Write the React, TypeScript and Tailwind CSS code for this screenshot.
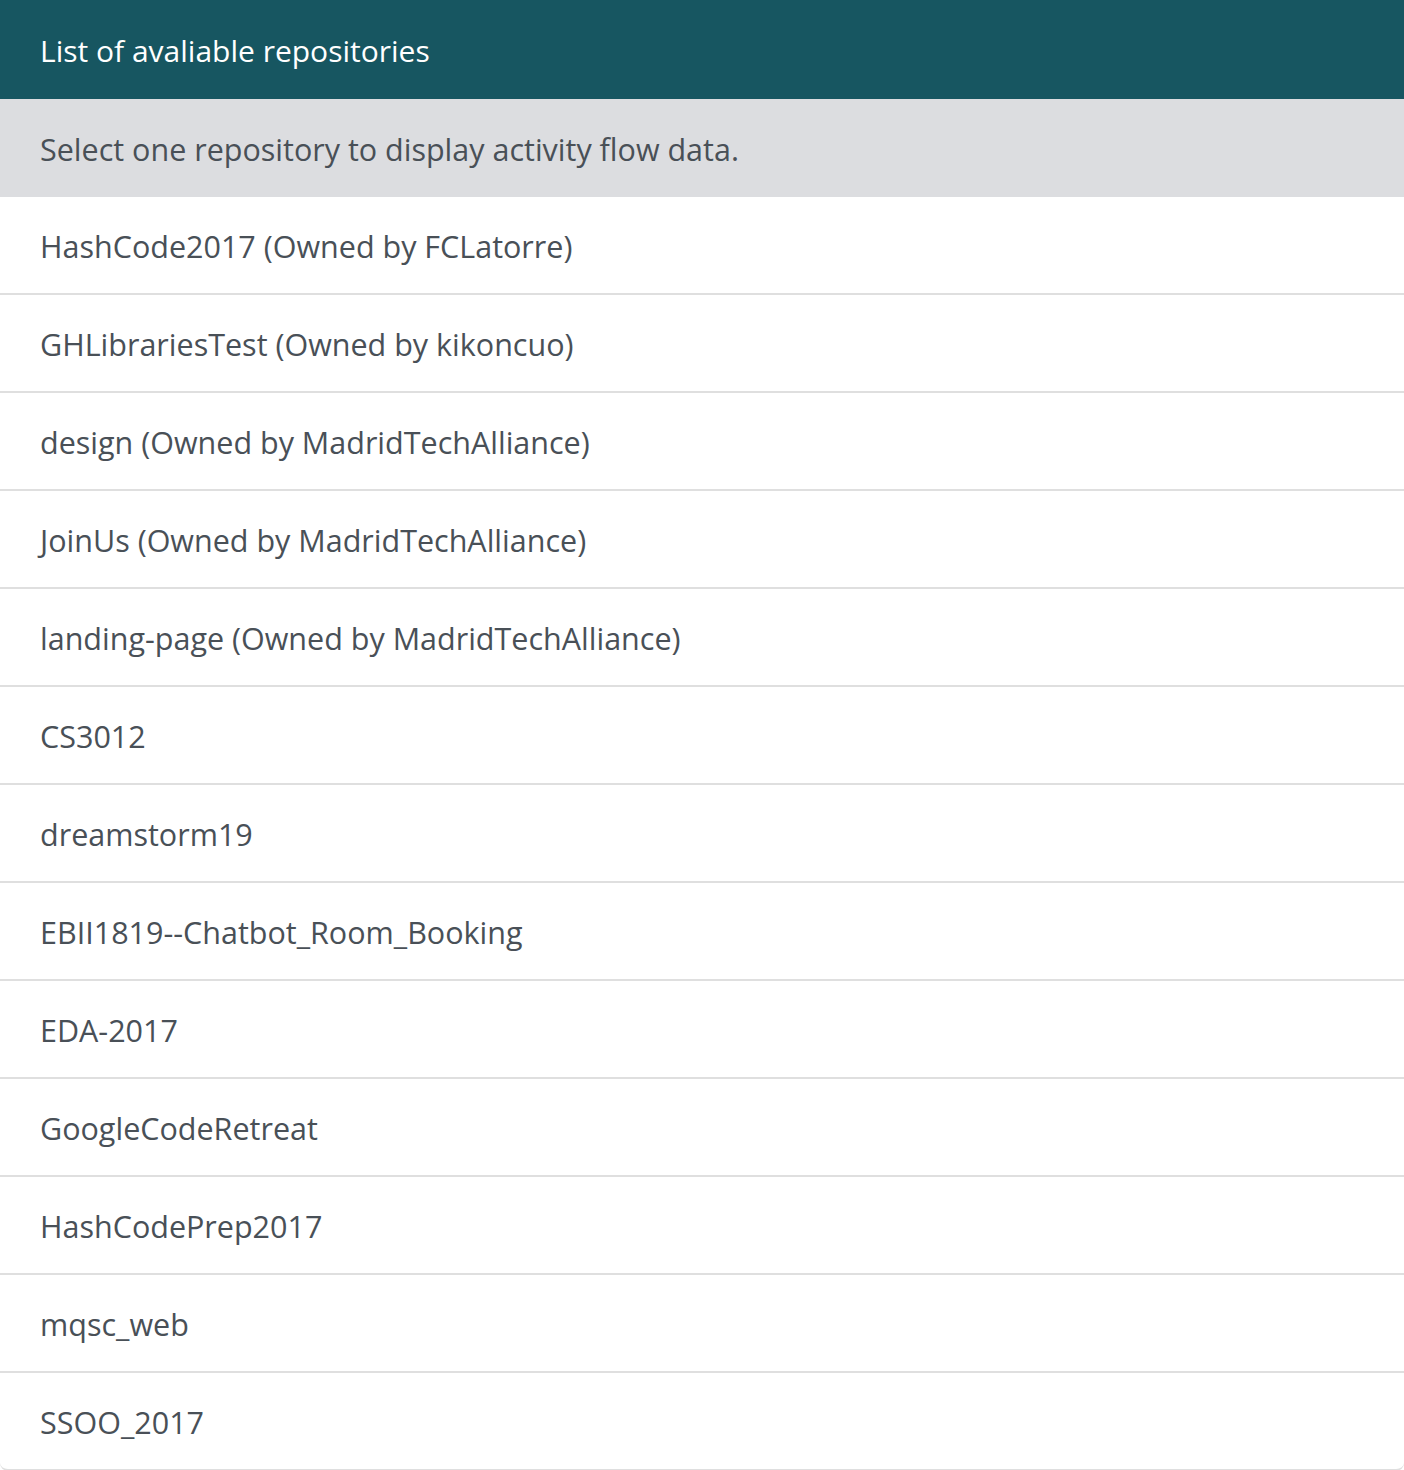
import React from 'react';

const repos: string[] = [
  'HashCode2017 (Owned by FCLatorre)',
  'GHLibrariesTest (Owned by kikoncuo)',
  'design (Owned by MadridTechAlliance)',
  'JoinUs (Owned by MadridTechAlliance)',
  'landing-page (Owned by MadridTechAlliance)',
  'CS3012',
  'dreamstorm19',
  'EBII1819--Chatbot_Room_Booking',
  'EDA-2017',
  'GoogleCodeRetreat',
  'HashCodePrep2017',
  'mqsc_web',
  'SSOO_2017',
];

const App: React.FC = () => {
  return (
    <div className="w-[1404px] bg-white" style={{ fontFamily: '"Open Sans", "Noto Sans", sans-serif' }}>
      <div className="h-[99px] bg-[#175661] px-10 pt-[2px] flex items-center text-[30px] text-white">
        List of avaliable repositories
      </div>
      <ul className="rounded-b-lg">
        <li className="h-[98px] bg-[#dcdde0] px-10 pt-1 flex items-center text-[30.5px] text-[#495057]">
          Select one repository to display activity flow data.
        </li>
        {repos.map((name, i) => (
          <li
            key={name}
            className={
              'h-[98px] px-10 pt-1 flex items-center text-[30.5px] text-[#495057] border-b-2 border-[#dfdfdf] ' +
              (i === repos.length - 1 ? 'rounded-b-lg' : '')
            }
          >
            {name}
          </li>
        ))}
      </ul>
    </div>
  );
};

export default App;
